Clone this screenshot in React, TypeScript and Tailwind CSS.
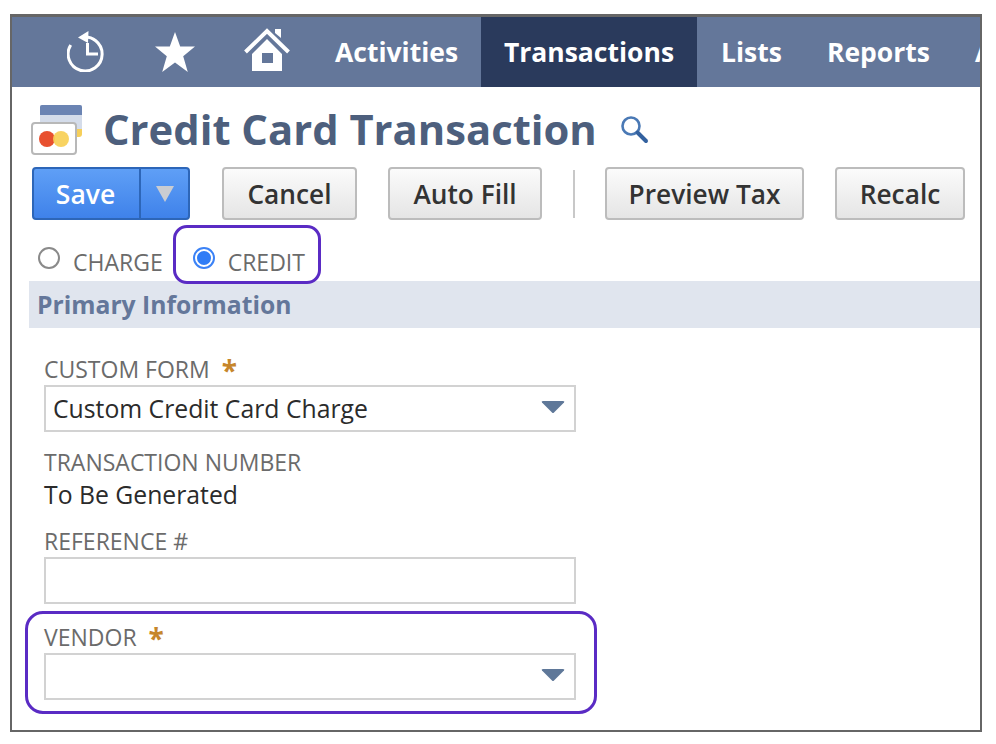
import React from "react";

function Caret({ className = "" }: { className?: string }) {
  return (
    <svg width="26" height="16" viewBox="0 0 26 16" className={className}>
      <path d="M3 2 L23 2 Q25 2 24 3.5 L14 13.5 Q13 14.5 12 13.5 L2 3.5 Q1 2 3 2 Z" fill="#5f7899" />
    </svg>
  );
}

function Req() {
  return (
    <span className="ml-[12px] text-[28px] leading-[20px] font-bold text-[#c6862b] relative top-[1px]">*</span>
  );
}

function Btn({ w, children }: { w: string; children: React.ReactNode }) {
  return (
    <button
      className={`${w} h-[53px] rounded-[4px] border-2 border-[#bcbcbc] bg-gradient-to-b from-[#fbfbfb] to-[#e5e5e5] text-[26.25px] font-semibold text-[#333] flex items-center justify-center pt-[2px]`}
    >
      {children}
    </button>
  );
}

export default function App() {
  return (
    <div
      className="w-[996px] h-[744px] bg-white pt-[14px] pl-[10px]"
      style={{ fontFamily: '"Open Sans", sans-serif' }}
    >
      <div className="relative w-[972px] h-[718px] border-2 border-t-[3px] border-[#666] overflow-hidden">
        {/* nav */}
        <div className="h-[70px] bg-[#64779a] flex items-center text-white text-[26.5px] font-bold whitespace-nowrap">
          <div className="w-[299px] flex items-center shrink-0">
            <svg width="40" height="42" viewBox="0 0 40 42" className="ml-[55px] mb-[2px]">
              <path d="M14 7.5 A17 17 0 1 1 3.7 15" fill="none" stroke="#fff" strokeWidth="3" />
              <path d="M21.5 1 L11 7.5 L21 13 Z" fill="#fff" />
              <path d="M20.5 13 V24 H31" fill="none" stroke="#fff" strokeWidth="3" />
            </svg>
            <svg width="42" height="42" viewBox="0 0 42 42" className="ml-[47px]">
              <path d="M21 1 L26.2 15.6 L41 15.6 L29.2 25.2 L33.8 41 L21 31.6 L8.2 41 L12.8 25.2 L1 15.6 L15.8 15.6 Z" fill="#fff" />
            </svg>
            <svg width="46" height="44" viewBox="0 0 46 44" className="ml-[48px] mb-[4px]">
              <path d="M1.5 24 L23 3 L44.5 24" fill="none" stroke="#fff" strokeWidth="4" />
              <path d="M31 1 H37 V10 L31 5 Z" fill="#fff" />
              <path fillRule="evenodd" d="M8 26 L23 11 L38 26 V43 H8 Z M18 25 V35 H29 V25 Z" fill="#fff" />
            </svg>
          </div>
          <div className="w-[170px] pl-[24px] pt-[2px] h-full flex items-center shrink-0">Activities</div>
          <div className="w-[216px] pt-[2px] h-full flex items-center justify-center bg-[#2a3a5c] shrink-0">Transactions</div>
          <div className="pl-[24px] pt-[2px] h-full flex items-center">Lists</div>
          <div className="pl-[45px] pt-[2px] h-full flex items-center">Reports</div>
          <div className="pl-[45px] pt-[2px] h-full flex items-center">Analytics</div>
        </div>

        {/* title */}
        <div className="h-[80px] flex items-center pl-[19px] pt-[4px]">
          <svg width="54" height="54" viewBox="0 0 54 54" className="shrink-0 mb-[1px]">
            <rect x="9" y="3" width="42" height="30" rx="2" fill="#d4dcea" />
            <path d="M9 5 Q9 3 11 3 H49 Q51 3 51 5 V13 H9 Z" fill="#6b84b3" />
            <path d="M43 27 H51 V32 Q51 35 48 35 H43 Z" fill="#f6cf5a" />
            <rect x="1" y="21" width="44" height="31" rx="3" fill="#fff" stroke="#b8b8b8" strokeWidth="2" />
            <circle cx="16" cy="37" r="8" fill="#e8502f" />
            <circle cx="30" cy="37" r="8" fill="#f7cf55" fillOpacity="0.92" />
          </svg>
          <h1 className="ml-[18px] text-[41.75px] leading-none font-bold text-[#4d5f7d] whitespace-nowrap">
            Credit Card Transaction
          </h1>
          <svg width="32" height="32" viewBox="0 0 32 32" className="ml-[22px] mt-[2px] shrink-0">
            <circle cx="12" cy="12" r="8.5" fill="none" stroke="#4a79b5" strokeWidth="2.6" />
            <path d="M18.5 18.5 L27 27" stroke="#33619f" strokeWidth="4" strokeLinecap="round" />
          </svg>
        </div>

        {/* buttons */}
        <div className="flex items-center pl-[20px]">
          <div className="w-[158px] h-[53px] rounded-[4px] border-2 border-[#2d66b8] bg-gradient-to-b from-[#5f9ff6] to-[#3f82ea] flex text-white text-[26.5px] font-semibold">
            <div className="w-[107px] flex items-center justify-center border-r-2 border-[#2d66b8] pt-[2px] pr-[2px]">Save</div>
            <div className="flex-1 flex items-center justify-center">
              <svg width="18" height="16" viewBox="0 0 18 16">
                <path d="M0 0 H18 L9 16 Z" fill="#c9ccd2" />
              </svg>
            </div>
          </div>
          <Btn w="ml-[32px] w-[135px]">Cancel</Btn>
          <Btn w="ml-[31px] w-[154px]">Auto Fill</Btn>
          <div className="ml-[31px] w-[2px] h-[48px] bg-[#c8c8c8]" />
          <Btn w="ml-[30px] w-[199px]">Preview Tax</Btn>
          <Btn w="ml-[31px] w-[130px]">Recalc</Btn>
        </div>

        {/* radios */}
        <div className="h-[61px] flex text-[23px] text-[#6b6b6b] pl-[26px] pt-[24px]">
          <div className="flex items-start">
            <span className="mt-[3px] w-[22px] h-[22px] rounded-full border-2 border-[#8a8a8a] bg-white shrink-0" />
            <span className="ml-[13px] mt-[2px] leading-[32px]">CHARGE</span>
          </div>
          <div className="flex items-start ml-[31px]">
            <span className="mt-[3px] -ml-[1px] w-[22px] h-[22px] rounded-full border-2 border-[#3b82f6] bg-white shrink-0 flex items-center justify-center">
              <span className="w-[14px] h-[14px] rounded-full bg-[#2f7cf6]" />
            </span>
            <span className="ml-[13px] mt-[2px] leading-[32px]">CREDIT</span>
          </div>
        </div>

        {/* section */}
        <div className="ml-[17px] h-[47px] bg-[#e0e5ee] flex items-center pl-[8px] text-[24.7px] font-bold text-[#64779a]">
          Primary Information
        </div>

        {/* form */}
        <div className="pl-[32px] w-[564px] text-[23px]">
          <div className="mt-[25px] h-[32px] leading-[32px] text-[#6b6b6b] flex items-center">
            CUSTOM FORM<Req />
          </div>
          <div className="h-[47px] border-2 border-[#d2d2d2] flex items-center justify-between pl-[7px] pr-[8px] text-[24.75px] text-[#2b2b2b]">
            <span>Custom Credit Card Charge</span>
            <Caret className="mb-[3px]" />
          </div>
          <div className="mt-[14px] h-[32px] leading-[32px] text-[#6b6b6b]">TRANSACTION NUMBER</div>
          <div className="h-[34px] leading-[34px] text-[24.75px] text-[#2b2b2b]">To Be Generated</div>
          <div className="mt-[13px] h-[32px] leading-[32px] text-[#6b6b6b]">REFERENCE #</div>
          <div className="h-[47px] border-2 border-[#d2d2d2]" />
          <div className="mt-[16px] h-[33px] leading-[30px] text-[#6b6b6b] flex items-center">
            VENDOR<Req />
          </div>
          <div className="h-[47px] border-2 border-[#d2d2d2] flex items-center justify-end pr-[8px]">
            <Caret className="mb-[3px]" />
          </div>
        </div>

        {/* highlights */}
        <div className="absolute left-[161px] top-[208px] w-[148px] h-[59px] rounded-[14px] border-[3px] border-[#5a2bc4]" />
        <div className="absolute left-[13px] top-[594px] w-[572px] h-[103px] rounded-[18px] border-[3px] border-[#5a2bc4]" />
      </div>
    </div>
  );
}
